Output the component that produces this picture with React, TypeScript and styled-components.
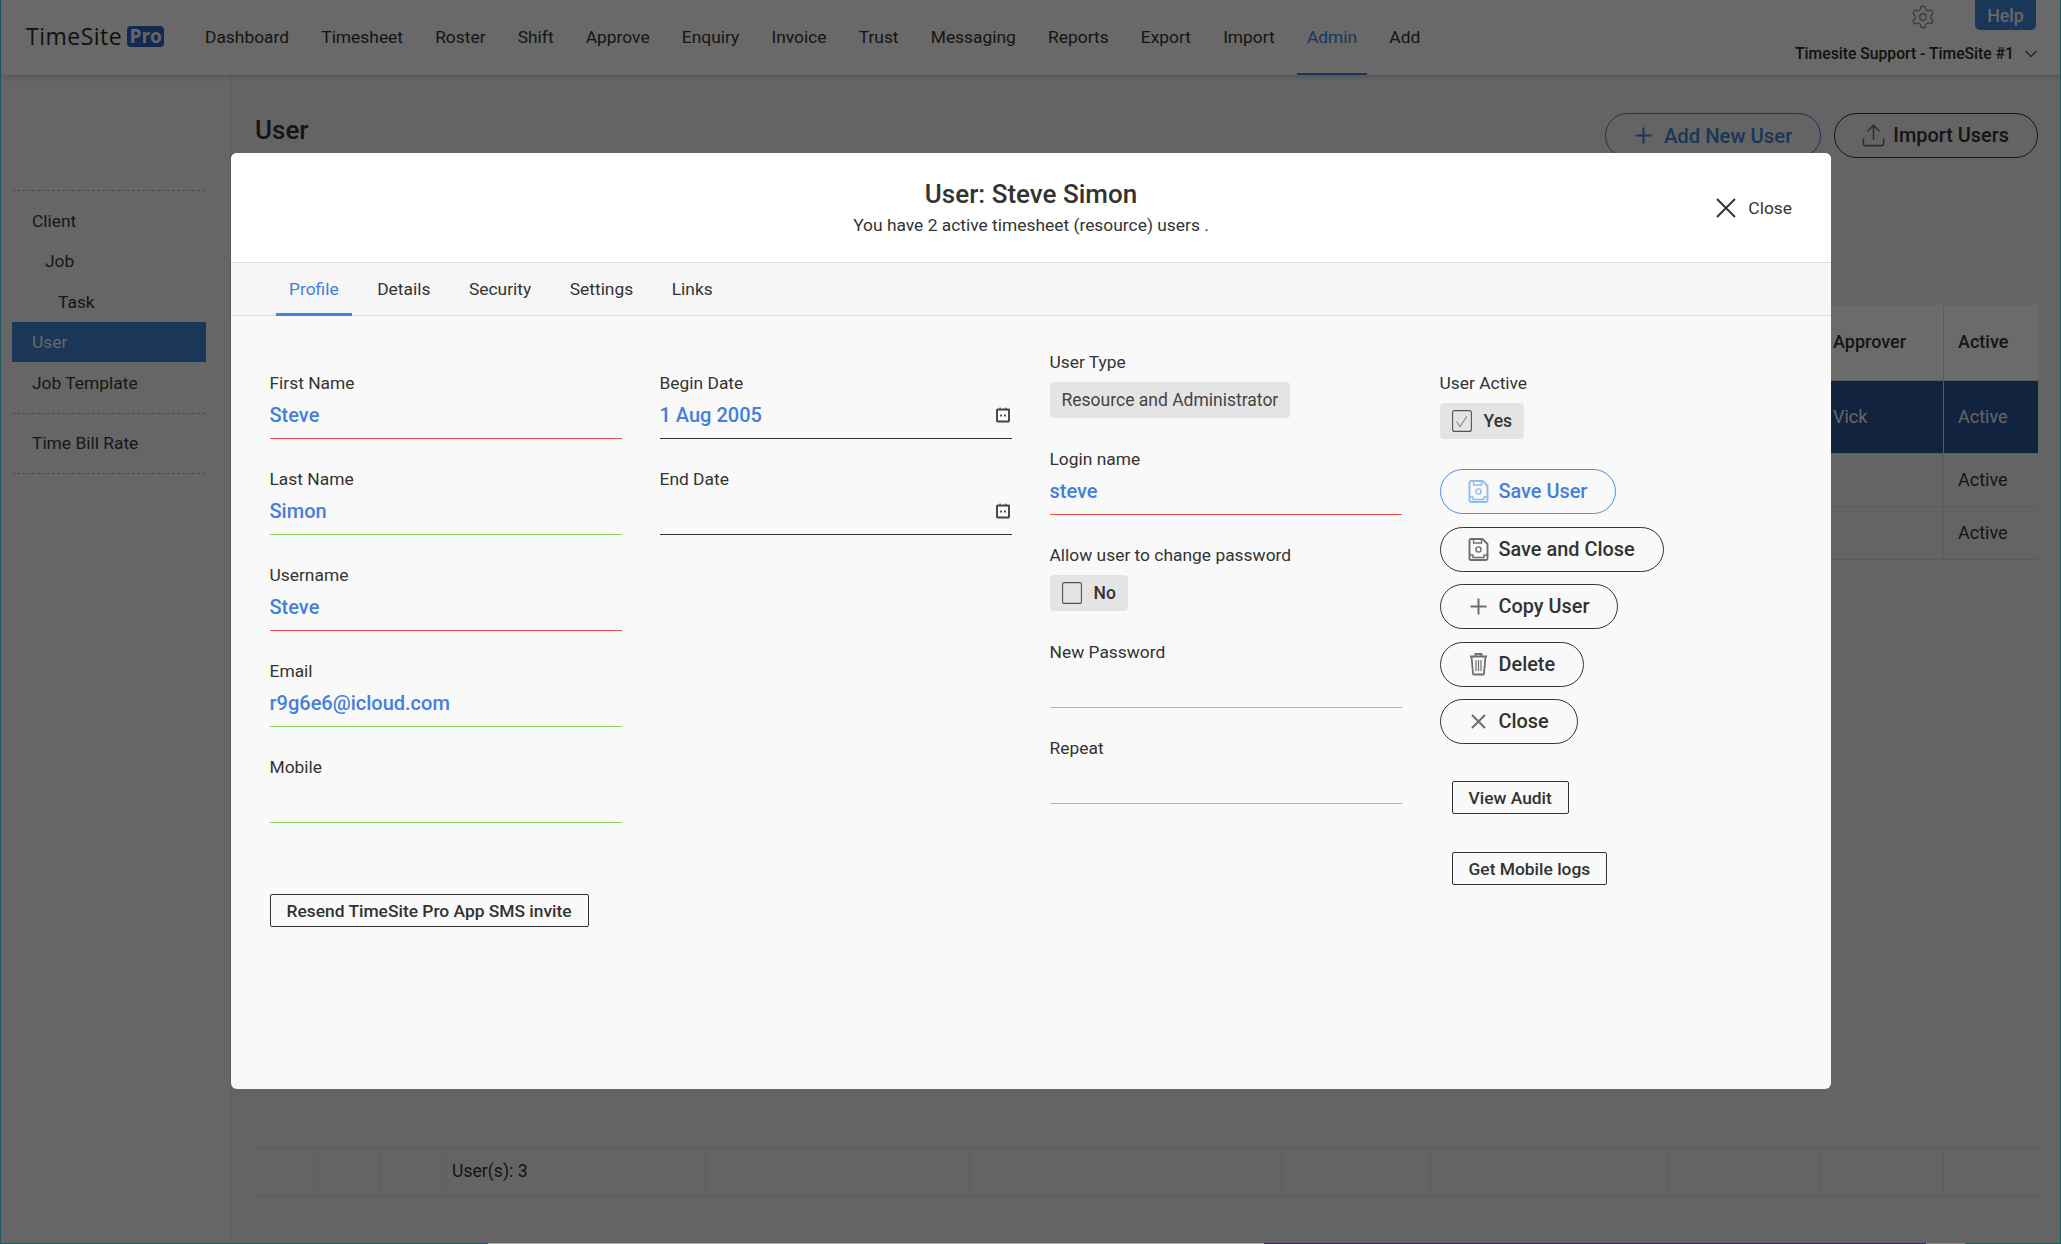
import React from 'react';
import styled, { createGlobalStyle } from 'styled-components';
import { ChevronDown, Settings, Upload } from 'lucide-react';

const GlobalStyle = createGlobalStyle`
  html, body {
    margin: 0;
    padding: 0;
    overflow: hidden;
  }
  body {
    font-family: Roboto, "Liberation Sans", sans-serif;
    font-size: 17.4px;
    color: #333;
  }
  * {
    box-sizing: border-box;
  }
`;

const BLUE = '#3e81d2';
const FIELD_BLUE = '#447fd9';
const RED = '#ef4a45';
const GREEN = '#7fd65c';

const Shell = styled.div`
  position: relative;
  display: flex;
  flex-direction: column;
  width: 100%;
  height: 100vh;
  background: #eee;
`;

const Frame = styled.div`
  flex: 1;
  display: flex;
  flex-direction: column;
  min-height: 0;
  border-left: 1px solid #48d8e2;
  border-right: 1px solid #48d8e2;
`;

const TopBar = styled.header`
  position: relative;
  display: flex;
  align-items: flex-start;
  height: 75px;
  padding: 0 24px 0 25px;
  background: #fafafa;
  box-shadow: 0 2px 6px rgba(0, 0, 0, 0.16);
`;

const Logo = styled.div`
  display: flex;
  align-items: center;
  gap: 5px;
  height: 72px;
  width: 169px;
  font-family: "Open Sans", sans-serif;
  font-size: 23px;
  letter-spacing: 0.5px;
  color: #2a2a2a;
`;

const LogoBadge = styled.span`
  display: inline-flex;
  align-items: center;
  justify-content: center;
  width: 37px;
  height: 21px;
  border-radius: 4px;
  background: #2f62bd;
  color: #f4f4f4;
  font-size: 19px;
  font-weight: 700;
  letter-spacing: 0;
`;

const Nav = styled.nav`
  display: flex;
  gap: 12.15px;
`;

const NavItem = styled.a<{ $active?: boolean }>`
  display: flex;
  align-items: center;
  height: 75px;
  padding: 0 10px 1px;
  color: ${(p) => (p.$active ? BLUE : '#333')};
  box-shadow: ${(p) => (p.$active ? `inset 0 -2px 0 ${BLUE}` : 'none')};
`;

const TopRight = styled.div`
  margin-left: auto;
  display: flex;
  flex-direction: column;
  align-items: flex-end;
`;

const TopTools = styled.div`
  display: flex;
  align-items: flex-start;
  gap: 39px;
  height: 42px;
  color: #8f8f8f;
  svg {
    margin-top: 4px;
  }
`;

const HelpButton = styled.button`
  width: 61px;
  height: 30px;
  padding: 0;
  border: 0;
  border-radius: 0 0 5px 5px;
  background: ${BLUE};
  color: #f4f4f4;
  font: 500 17.8px Roboto, sans-serif;
`;

const Account = styled.div`
  display: flex;
  align-items: center;
  gap: 7px;
  height: 23px;
  margin-right: -5px;
  font-size: 15.7px;
  font-weight: 500;
  color: #2a2a2a;
  svg {
    color: #666;
  }
`;

const Body = styled.div`
  flex: 1;
  display: flex;
  min-height: 0;
`;

const Sidebar = styled.aside`
  flex: none;
  width: 230px;
  padding: 115px 0 0 11px;
  background: #f4f4f4;
  border-right: 1px solid #d8d8d8;
`;

const SideRule = styled.div`
  width: 193px;
  border-top: 1px dashed #b4b4b4;
`;

const SideList = styled.div`
  width: 194px;
  padding: 9px 0 10px;
`;

const SideItem = styled.a<{ $level?: number; $active?: boolean }>`
  display: flex;
  align-items: center;
  height: 40.5px;
  padding: 1px 0 0 ${(p) => 20 + (p.$level || 0) * 13}px;
  background: ${(p) => (p.$active ? BLUE : 'transparent')};
  color: ${(p) => (p.$active ? '#f4f4f4' : '#383838')};
`;

const Main = styled.main`
  flex: 1;
  min-width: 0;
  display: flex;
  flex-direction: column;
  padding: 38px 22px 46px 24px;
`;

const TitleRow = styled.div`
  display: flex;
  align-items: center;
  justify-content: space-between;
  margin-bottom: 147px;
`;

const PageTitle = styled.h1`
  margin: 0 0 12px;
  font-size: 26px;
  font-weight: 500;
  color: #333;
`;

const Actions = styled.div`
  display: flex;
  gap: 13px;
`;

const Pill = styled.button<{ $tone?: 'primary' | 'page' }>`
  display: inline-flex;
  align-items: center;
  gap: 10px;
  height: 45px;
  padding: 0 28px;
  border: 1px solid ${(p) => (p.$tone === 'primary' ? '#4a90e2' : p.$tone === 'page' ? BLUE : '#333')};
  border-radius: 23px;
  background: transparent;
  color: ${(p) => (p.$tone === 'primary' ? FIELD_BLUE : p.$tone === 'page' ? BLUE : '#333')};
  font: 500 ${(p) => (p.$tone === 'page' ? 20.3 : 19.9)}px Roboto, sans-serif;
  white-space: nowrap;
`;

const PillIcon = styled.span<{ $tone?: 'primary' | 'page' }>`
  display: flex;
  align-items: center;
  justify-content: center;
  width: 20px;
  color: ${(p) => (p.$tone === 'primary' ? '#8dbcee' : p.$tone === 'page' ? BLUE : '#6e6e6e')};
  svg {
    flex: none;
  }
`;

const Row = styled.div<{ $height: number; $tone?: string }>`
  display: grid;
  grid-template-columns: 63px 62px 63px 263px 264px 312px 149px 238px 151px 124px 93px;
  height: ${(p) => p.$height}px;
  background: ${(p) => p.$tone || 'transparent'};
  border-bottom: 1px solid #dcdcdc;
`;

const Cell = styled.div<{ $head?: boolean; $inverse?: boolean; $last?: boolean }>`
  display: flex;
  align-items: center;
  padding: 0 0 2px ${(p) => (p.$last ? 14 : 13)}px;
  border-right: ${(p) => (p.$last ? '0' : '1px solid #dcdcdc')};
  font-size: 18px;
  font-weight: ${(p) => (p.$head ? 500 : 400)};
  color: ${(p) => (p.$inverse ? '#f0f0f0' : '#333')};
`;

const FooterRow = styled(Row)`
  margin-top: auto;
  border-top: 1px solid #d4d4d4;
  border-bottom: 1px solid #d4d4d4;
`;

const FooterCell = styled(Cell)`
  padding-left: 9px;
  font-size: 17.6px;
  border-right-color: #dedede;
`;

const Strip = styled.div`
  display: flex;
  flex: none;
  height: 1px;
`;

const StripPart = styled.span<{ $width: number; $color: string }>`
  width: ${(p) => p.$width}px;
  background: ${(p) => p.$color};
`;

const Backdrop = styled.div`
  position: absolute;
  inset: 0 0 1px 0;
  z-index: 2;
  padding: 153px 0 0 231px;
  background: rgba(0, 0, 0, 0.58);
`;

const Modal = styled.section`
  position: relative;
  display: flex;
  flex-direction: column;
  width: 1600px;
  height: 936px;
  border-radius: 6px;
  overflow: hidden;
  background: #f9f9f9;
`;

const ModalHeader = styled.div`
  position: relative;
  display: flex;
  flex-direction: column;
  align-items: center;
  flex: none;
  height: 110px;
  padding-top: 24px;
  background: #fff;
  border-bottom: 1px solid #dedede;
`;

const ModalTitle = styled.h2`
  margin: 0;
  font-size: 26px;
  line-height: 34px;
  font-weight: 500;
  color: #333;
`;

const ModalSub = styled.p`
  margin: 1px 0 0;
  line-height: 26px;
  color: #333;
`;

const CloseLink = styled.button`
  position: absolute;
  top: 43px;
  right: 39px;
  display: flex;
  align-items: center;
  gap: 12px;
  height: 24px;
  padding: 0;
  border: 0;
  background: none;
  color: #333;
  font: 400 17.4px Roboto, sans-serif;
`;

const Tabs = styled.div`
  display: flex;
  flex: none;
  gap: 12.5px;
  height: 53px;
  padding-left: 45px;
  background: #f6f6f6;
  border-bottom: 1px solid #dedede;
`;

const Tab = styled.a<{ $active?: boolean }>`
  display: flex;
  align-items: center;
  height: 53px;
  padding: 0 13px 2px;
  color: ${(p) => (p.$active ? FIELD_BLUE : '#333')};
  box-shadow: ${(p) => (p.$active ? `inset 0 -3px 0 ${FIELD_BLUE}` : 'none')};
`;

const FormGrid = styled.div`
  display: grid;
  grid-template-columns: repeat(4, 352px);
  gap: 38px;
  align-items: start;
  padding: 56px 0 0 38.5px;
`;

const Column = styled.div<{ $lift?: number }>`
  display: flex;
  flex-direction: column;
  align-items: flex-start;
  margin-top: ${(p) => -(p.$lift || 0)}px;
`;

const FieldBox = styled.div<{ $line: string }>`
  width: 100%;
  height: 67px;
  margin-bottom: 29px;
  border-bottom: 1px solid ${(p) => p.$line};
`;

const Label = styled.div`
  height: 24px;
  line-height: 22.5px;
  color: #333;
`;

const ValueRow = styled.div`
  display: flex;
  align-items: center;
  justify-content: space-between;
  height: 30px;
  margin-top: 4px;
  padding-right: 2px;
  color: ${FIELD_BLUE};
  font-size: 20px;
  font-weight: 500;
`;

const ChipField = styled.div`
  margin-bottom: 30px;
`;

const Chip = styled.div`
  display: inline-flex;
  align-items: center;
  gap: 12px;
  height: 36px;
  margin-top: 7px;
  padding: 0 12px;
  border-radius: 4px;
  background: #e4e4e4;
  color: #444;
  font-size: 17.5px;
`;

const ChipStrong = styled.span`
  font-weight: 500;
  color: #333;
`;

const PillStack = styled.div`
  display: flex;
  flex-direction: column;
  align-items: flex-start;
  gap: 12.5px;
`;

const SmallButton = styled.button<{ $top: number; $indent?: number }>`
  height: 33px;
  margin: ${(p) => p.$top}px 0 0 ${(p) => p.$indent || 0}px;
  padding: 0 16px;
  border: 1px solid #333;
  border-radius: 2px;
  background: transparent;
  color: #333;
  font: 500 17.4px Roboto, sans-serif;
  white-space: nowrap;
`;

const SaveIcon = () => (
  <svg width="21" height="23" viewBox="0 0 20 23" fill="none" stroke="currentColor" strokeWidth="1.9">
    <path d="M1 2.5C1 1.6 1.6 1 2.5 1H14l5 5v14.5c0 .9-.6 1.5-1.5 1.5h-15C1.6 22 1 21.4 1 20.5z" />
    <path d="M5 1v4h8V1" strokeWidth="1.3" />
    <circle cx="10" cy="11.5" r="2.6" strokeWidth="1.4" />
    <path d="M1.5 17h3v2.5h11V17h3" strokeWidth="1.4" />
  </svg>
);

const TrashIcon = () => (
  <svg width="19" height="24" viewBox="0 0 19 23" fill="none" stroke="currentColor" strokeWidth="1.8">
    <path d="M1 4h17M6.5 4V1.5h6V4" />
    <path d="M2.5 4l1.5 17c0 .6.5 1 1 1h9c.5 0 1-.4 1-1l1.5-17" />
    <path d="M7 7.5v11M9.5 7.5v11M12 7.5v11" strokeWidth="1.2" />
  </svg>
);

const CrossIcon = ({ size = 15, weight = 2 }: { size?: number; weight?: number }) => (
  <svg width={size} height={size} viewBox={`0 0 ${size} ${size}`} fill="none" stroke="currentColor" strokeWidth={weight}>
    <path d={`M1 1L${size - 1} ${size - 1}M${size - 1} 1L1 ${size - 1}`} />
  </svg>
);

const PlusIcon = () => (
  <svg width="17" height="17" viewBox="0 0 17 17" fill="none" stroke="currentColor" strokeWidth="2">
    <path d="M8.5 0.5v16M0.5 8.5h16" />
  </svg>
);

const CalendarIcon = () => (
  <svg width="14" height="16" viewBox="0 0 14 16" fill="none" stroke="#444">
    <rect x="1" y="2.5" width="12" height="12" strokeWidth="1.9" rx="0.5" />
    <path d="M4 0.5v3M10 0.5v3" strokeWidth="1" />
    <path d="M4.2 8.5h1.8M8 8.5h1.8" strokeWidth="1.9" />
  </svg>
);

const CheckBox = ({ checked }: { checked?: boolean }) => (
  <svg width="20" height="22" viewBox="0 0 20 22" fill="none">
    <rect x="0.6" y="0.6" width="18.8" height="20.8" rx="2" stroke="#555" strokeWidth="1.1" />
    {checked && <path d="M4.5 11.5l3.5 5L15 6" stroke="#888" strokeWidth="1.1" />}
  </svg>
);

const Field = ({ label, value, line, date }: { label: string; value?: string; line: string; date?: boolean }) => (
  <FieldBox $line={line}>
    <Label>{label}</Label>
    <ValueRow>
      <span>{value}</span>
      {date && <CalendarIcon />}
    </ValueRow>
  </FieldBox>
);

const navItems = ['Dashboard', 'Timesheet', 'Roster', 'Shift', 'Approve', 'Enquiry', 'Invoice', 'Trust', 'Messaging', 'Reports', 'Export', 'Import', 'Admin', 'Add'];
const tabItems = ['Profile', 'Details', 'Security', 'Settings', 'Links'];
const blanks = Array.from({ length: 9 });

const TableRow = ({ height, tone, inverse, approver, active, head }: { height: number; tone?: string; inverse?: boolean; approver?: string; active: string; head?: boolean }) => (
  <Row $height={height} $tone={tone}>
    {blanks.map((_, i) => (
      <Cell key={i} />
    ))}
    <Cell $head={head} $inverse={inverse}>{approver}</Cell>
    <Cell $head={head} $inverse={inverse} $last>{active}</Cell>
  </Row>
);

export default function App() {
  return (
    <Shell>
      <GlobalStyle />
      <Frame>
        <TopBar>
          <Logo>
            TimeSite
            <LogoBadge>Pro</LogoBadge>
          </Logo>
          <Nav>
            {navItems.map((item) => (
              <NavItem key={item} $active={item === 'Admin'}>{item}</NavItem>
            ))}
          </Nav>
          <TopRight>
            <TopTools>
              <Settings size={26} strokeWidth={1.2} />
              <HelpButton>Help</HelpButton>
            </TopTools>
            <Account>
              Timesite Support - TimeSite #1
              <ChevronDown size={20} />
            </Account>
          </TopRight>
        </TopBar>
        <Body>
          <Sidebar>
            <SideRule />
            <SideList>
              <SideItem>Client</SideItem>
              <SideItem $level={1}>Job</SideItem>
              <SideItem $level={2}>Task</SideItem>
              <SideItem $active>User</SideItem>
              <SideItem>Job Template</SideItem>
            </SideList>
            <SideRule />
            <SideList>
              <SideItem>Time Bill Rate</SideItem>
            </SideList>
            <SideRule />
          </Sidebar>
          <Main>
            <TitleRow>
              <PageTitle>User</PageTitle>
              <Actions>
                <Pill $tone="page">
                  <PillIcon $tone="page"><PlusIcon /></PillIcon>
                  Add New User
                </Pill>
                <Pill>
                  <PillIcon><Upload size={27} strokeWidth={1.4} /></PillIcon>
                  Import Users
                </Pill>
              </Actions>
            </TitleRow>
            <TableRow height={76} tone="#fff" approver="Approver" active="Active" head />
            <TableRow height={73} tone="#2b5396" inverse approver="Vick" active="Active" />
            <TableRow height={53} tone="#efefef" active="Active" />
            <TableRow height={53} active="Active" />
            <FooterRow $height={50}>
              {blanks.slice(0, 3).map((_, i) => (
                <FooterCell key={i} />
              ))}
              <FooterCell>User(s): 3</FooterCell>
              {Array.from({ length: 7 }).map((_, i) => (
                <FooterCell key={i} $last={i === 6} />
              ))}
            </FooterRow>
          </Main>
        </Body>
      </Frame>
      <Strip>
        <StripPart $width={488} $color="#1f5a60" />
        <StripPart $width={776} $color="#a8a8a8" />
        <StripPart $width={662} $color="#3c2a58" />
        <StripPart $width={39} $color="#8a8a8a" />
        <StripPart $width={96} $color="#1f5a60" />
      </Strip>
      <Backdrop>
        <Modal>
          <ModalHeader>
            <ModalTitle>User: Steve Simon</ModalTitle>
            <ModalSub>You have 2 active timesheet (resource) users .</ModalSub>
            <CloseLink>
              <CrossIcon size={20} weight={1.9} />
              Close
            </CloseLink>
          </ModalHeader>
          <Tabs>
            {tabItems.map((tab) => (
              <Tab key={tab} $active={tab === 'Profile'}>{tab}</Tab>
            ))}
          </Tabs>
          <FormGrid>
            <Column>
              <Field label="First Name" value="Steve" line={RED} />
              <Field label="Last Name" value="Simon" line={GREEN} />
              <Field label="Username" value="Steve" line={RED} />
              <Field label="Email" value="r9g6e6@icloud.com" line={GREEN} />
              <Field label="Mobile" line={GREEN} />
              <SmallButton $top={42}>Resend TimeSite Pro App SMS invite</SmallButton>
            </Column>
            <Column>
              <Field label="Begin Date" value="1 Aug 2005" line="#333" date />
              <Field label="End Date" line="#333" date />
            </Column>
            <Column $lift={21}>
              <ChipField>
                <Label>User Type</Label>
                <Chip>Resource and Administrator</Chip>
              </ChipField>
              <Field label="Login name" value="steve" line={RED} />
              <ChipField>
                <Label>Allow user to change password</Label>
                <Chip>
                  <CheckBox />
                  <ChipStrong>No</ChipStrong>
                </Chip>
              </ChipField>
              <Field label="New Password" line={GREEN} />
              <Field label="Repeat" line={GREEN} />
            </Column>
            <Column>
              <ChipField>
                <Label>User Active</Label>
                <Chip>
                  <CheckBox checked />
                  <ChipStrong>Yes</ChipStrong>
                </Chip>
              </ChipField>
              <PillStack>
                <Pill $tone="primary">
                  <PillIcon $tone="primary"><SaveIcon /></PillIcon>
                  Save User
                </Pill>
                <Pill>
                  <PillIcon><SaveIcon /></PillIcon>
                  Save and Close
                </Pill>
                <Pill>
                  <PillIcon><PlusIcon /></PillIcon>
                  Copy User
                </Pill>
                <Pill>
                  <PillIcon><TrashIcon /></PillIcon>
                  Delete
                </Pill>
                <Pill>
                  <PillIcon><CrossIcon /></PillIcon>
                  Close
                </Pill>
              </PillStack>
              <SmallButton $top={37} $indent={12}>View Audit</SmallButton>
              <SmallButton $top={38} $indent={12}>Get Mobile logs</SmallButton>
            </Column>
          </FormGrid>
        </Modal>
      </Backdrop>
    </Shell>
  );
}
